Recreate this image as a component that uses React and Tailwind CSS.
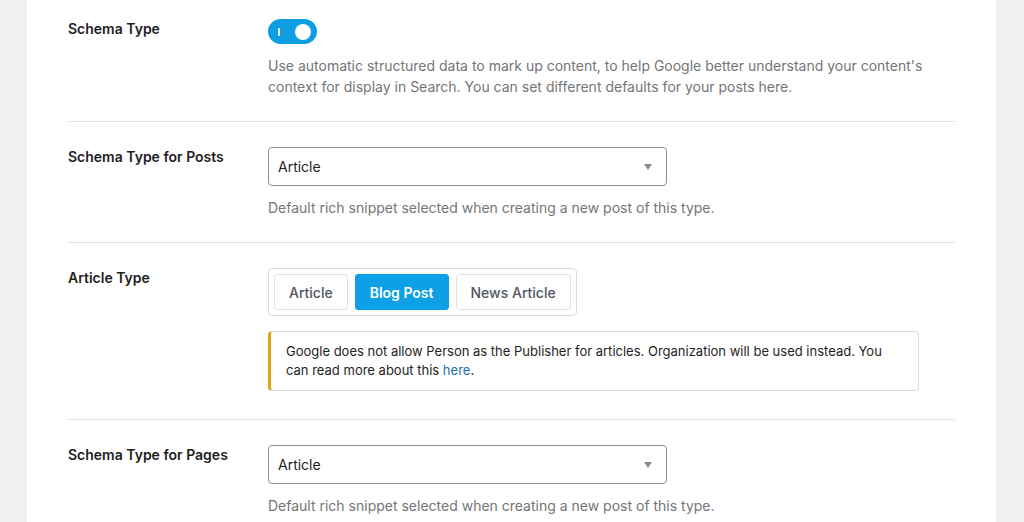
import React, { useState } from 'react';

const font = { fontFamily: 'Inter, "Noto Sans", sans-serif' };

const Select = ({ value }) => (
  <div className="w-[399px] h-[39px] border border-[#8c8f94] rounded-[4px] flex items-center justify-between pl-[9px] pr-[14px] bg-white">
    <span className="text-[14px] text-[#1e1e1e]">{value}</span>
    <svg width="8" height="6" viewBox="0 0 8 6"><path d="M0 0h8L4 6z" fill="#8a8a8a" /></svg>
  </div>
);

const Desc = ({ children }) => (
  <p className="mt-[11px] text-[14px] leading-[21px] text-[#757575]">{children}</p>
);

const Row = ({ label, children, className, last }) => (
  <div className={`flex ${last ? '' : 'border-b border-[#e2e2e2]'} ${className}`}>
    <div className="w-[200px] shrink-0 text-[14px] leading-[20px] font-semibold text-[#1e1e1e]">{label}</div>
    <div className="flex-1">{children}</div>
  </div>
);

export default function App() {
  const [enabled, setEnabled] = useState(true);
  const [articleType, setArticleType] = useState('Blog Post');
  const types = ['Article', 'Blog Post', 'News Article'];

  return (
    <div className="w-[1024px] h-[522px] bg-[#f0f0f1] overflow-hidden" style={font}>
      <div className="ml-[27px] w-[969px] h-full bg-white px-[41px]">
        <Row label="Schema Type" className="pt-[19px] pb-[24px]">
          <button
            onClick={() => setEnabled(!enabled)}
            className={`w-[49px] h-[25px] rounded-full flex items-center justify-between px-[6px] ${enabled ? 'bg-[#0c9de3]' : 'bg-gray-400'}`}
          >
            <span className="w-[2px] h-[8px] bg-white rounded-sm ml-[4px]" />
            <span className="w-[16px] h-[16px] bg-white rounded-full" />
          </button>
          <Desc>
            Use automatic structured data to mark up content, to help Google better understand your content's context for display in Search. You can set different defaults for your posts here.
          </Desc>
        </Row>

        <Row label="Schema Type for Posts" className="pt-[25px] pb-[24px]">
          <Select value="Article" />
          <Desc>Default rich snippet selected when creating a new post of this type.</Desc>
        </Row>

        <Row label="Article Type" className="pt-[25px] pb-[28px]">
          <div className="inline-flex gap-[7px] p-[5px] border border-[#dcdcde] rounded-[4px]">
            {types.map(t => (
              <button
                key={t}
                onClick={() => setArticleType(t)}
                className={`h-[36px] px-[14px] rounded-[3px] text-[14px] ${articleType === t ? 'bg-[#0ea0e6] text-white font-semibold border border-[#0ea0e6]' : 'bg-white text-[#50575e] font-medium border border-[#e0e0e0]'}`}
              >
                {t}
              </button>
            ))}
          </div>
          <div className="mt-[15px] w-[651px] border border-[#dcdcde] border-l-[3px] border-l-[#dba617] rounded-[4px] pl-[15px] pr-[16px] pt-[10px] pb-[10px] text-[13px] leading-[19px] text-[#1e1e1e]">
            Google does not allow Person as the Publisher for articles. Organization will be used instead. You can read more about this <a href="#" className="text-[#2271b1]">here</a>.
          </div>
        </Row>

        <Row label="Schema Type for Pages" className="pt-[25px] pb-[23px]" last>
          <Select value="Article" />
          <Desc>Default rich snippet selected when creating a new post of this type.</Desc>
        </Row>
      </div>
    </div>
  );
}
